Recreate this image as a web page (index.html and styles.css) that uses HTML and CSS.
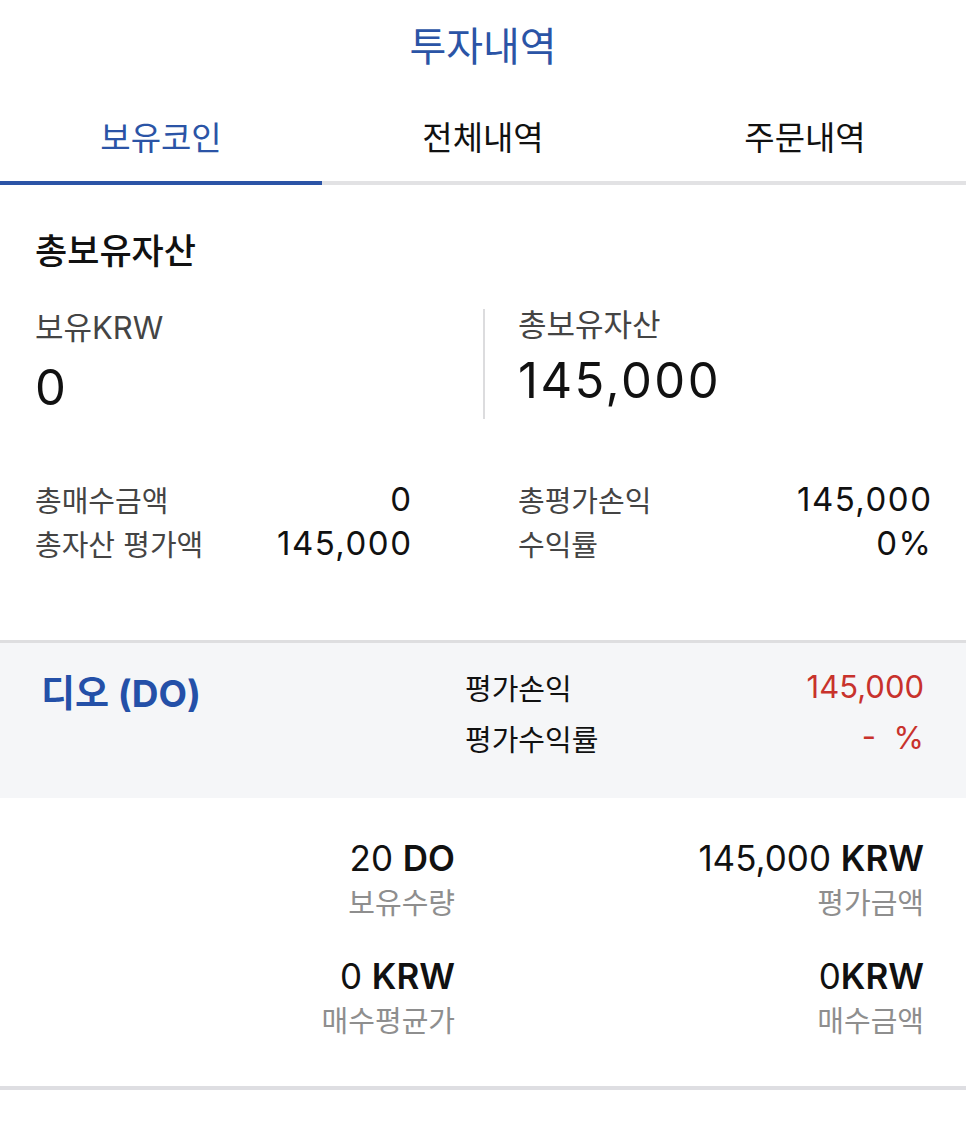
FILE: index.html
```html
<!DOCTYPE html>
<html lang="ko">
<head>
<meta charset="utf-8">
<title>투자내역</title>
<link rel="stylesheet" href="styles.css">
</head>
<body>
<div class="page">
  <header class="header"><h1 class="title">투자내역</h1></header>
  <nav class="tabs">
    <div class="tab active">보유코인</div>
    <div class="tab">전체내역</div>
    <div class="tab">주문내역</div>
  </nav>

  <section class="summary">
    <h2 class="summary-title">총보유자산</h2>
    <div class="big-row">
      <div class="big-cell left">
        <div class="big-label">보유KRW</div>
        <div class="big-value">0</div>
      </div>
      <div class="big-cell right">
        <div class="big-label">총보유자산</div>
        <div class="big-value">145,000</div>
      </div>
    </div>
    <div class="stats">
      <div class="stat-col">
        <div class="stat"><span class="stat-label">총매수금액</span><span class="stat-value">0</span></div>
        <div class="stat"><span class="stat-label">총자산 평가액</span><span class="stat-value">145,000</span></div>
      </div>
      <div class="stat-col">
        <div class="stat"><span class="stat-label">총평가손익</span><span class="stat-value">145,000</span></div>
        <div class="stat"><span class="stat-label">수익률</span><span class="stat-value">0%</span></div>
      </div>
    </div>
  </section>

  <section class="coin">
    <div class="coin-name">디오 (DO)</div>
    <div class="coin-stats">
      <div class="coin-stat"><span class="coin-label">평가손익</span><span class="coin-value">145,000</span></div>
      <div class="coin-stat"><span class="coin-label">평가수익률</span><span class="coin-value">-&nbsp;&nbsp;%</span></div>
    </div>
  </section>

  <section class="detail">
    <div class="detail-cell">
      <div class="detail-value">20 <b>DO</b></div>
      <div class="detail-label">보유수량</div>
    </div>
    <div class="detail-cell">
      <div class="detail-value">145,000 <b>KRW</b></div>
      <div class="detail-label">평가금액</div>
    </div>
    <div class="detail-cell">
      <div class="detail-value">0 <b>KRW</b></div>
      <div class="detail-label">매수평균가</div>
    </div>
    <div class="detail-cell">
      <div class="detail-value">0<b>KRW</b></div>
      <div class="detail-label">매수금액</div>
    </div>
  </section>
</div>
</body>
</html>
```

FILE: styles.css
```css
* { box-sizing: border-box; }
html, body { margin: 0; padding: 0; background: #ffffff; }
body {
  font-family: Inter, "Noto Sans CJK KR", sans-serif;
  color: #111111;
}
.page { width: 966px; }

.header {
  height: 94px;
  display: flex;
  align-items: center;
  justify-content: center;
}
.title {
  margin: 0;
  font-size: 40px;
  font-weight: 400;
  color: #2b54a6;
  line-height: 1;
}

.tabs {
  display: grid;
  grid-template-columns: 322px 322px 322px;
}
.tab {
  height: 91px;
  display: flex;
  align-items: center;
  justify-content: center;
  padding-bottom: 4px;
  font-size: 33px;
  color: #111111;
  border-bottom: 4px solid #e2e2e4;
}
.tab.active {
  color: #2b54a6;
  border-bottom-color: #2b54a6;
}

.summary {
  padding: 44px 35px 0 35px;
  height: 455px;
}
.summary-title {
  margin: 0;
  font-size: 35px;
  font-weight: 500;
  line-height: 44px;
  color: #111111;
}
.big-row {
  display: grid;
  grid-template-columns: 448px 1fr;
  margin-top: 36px;
  height: 110px;
}
.big-cell.right {
  border-left: 2px solid #dcdcde;
  padding-left: 33px;
}
.big-cell.left { padding-top: 3px; }
.big-label {
  font-size: 31px;
  line-height: 32px;
  color: #444444;
}
.big-value {
  font-size: 49px;
  line-height: 60px;
  letter-spacing: 2.5px;
  margin-top: 10px;
  color: #111111;
}
.big-cell.left .big-value { margin-top: 14px; }
.stats {
  display: grid;
  grid-template-columns: 376px 413px;
  column-gap: 107px;
  margin-top: 58px;
}
.stat {
  display: flex;
  justify-content: space-between;
  align-items: center;
  height: 44px;
}
.stat-label {
  font-size: 29px;
  color: #444444;
}
.stat-value {
  font-size: 33px;
  letter-spacing: 1.5px;
  margin-right: -1.5px;
  color: #111111;
}

.coin {
  border-top: 3px solid #dedee0;
  background: #f5f6f8;
  height: 158px;
  display: grid;
  grid-template-columns: 424px 1fr;
  padding: 18px 42px 0 41px;
}
.coin-name {
  margin-top: 11px;
  font-size: 37px;
  font-weight: 700;
  color: #2450a8;
  line-height: 44px;
}
.coin-stats { display: flex; flex-direction: column; }
.coin-stat {
  display: flex;
  justify-content: space-between;
  align-items: center;
  height: 51px;
}
.coin-label { font-size: 29px; color: #111111; }
.coin-value { font-size: 31px; color: #c8322c; }

.detail {
  display: grid;
  grid-template-columns: 455px 469px;
  row-gap: 26px;
  padding: 40px 0 38px 0;
  border-bottom: 4px solid #dedee2;
}
.detail-cell { text-align: right; }
.detail-value {
  font-size: 35px;
  line-height: 40px;
  color: #111111;
}
.detail-value b { font-weight: 600; }
.detail-label {
  font-size: 29px;
  line-height: 52px;
  color: #8e8e8e;
}
```
